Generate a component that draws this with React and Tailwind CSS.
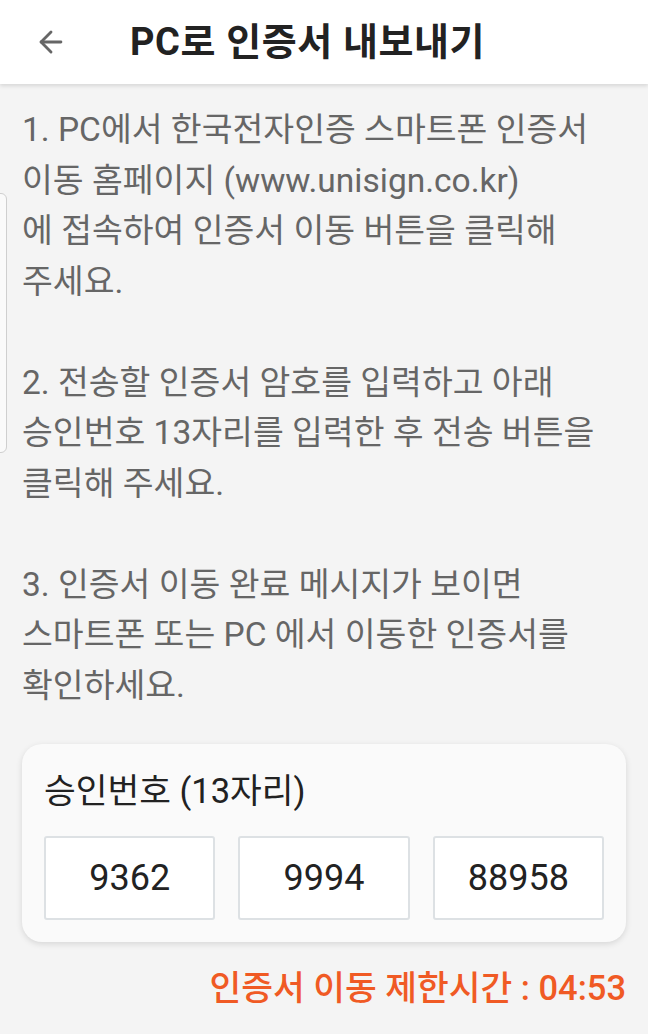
import { ArrowLeft } from 'lucide-react';

const font = { fontFamily: 'Roboto, "Noto Sans CJK KR", sans-serif' };

const guide = [
  '1. PC에서 한국전자인증 스마트폰 인증서',
  '이동 홈페이지 (www.unisign.co.kr)',
  '에 접속하여 인증서 이동 버튼을 클릭해',
  '주세요.',
  '',
  '2. 전송할 인증서 암호를 입력하고 아래',
  '승인번호 13자리를 입력한 후 전송 버튼을',
  '클릭해 주세요.',
  '',
  '3. 인증서 이동 완료 메시지가 보이면',
  '스마트폰 또는 PC 에서 이동한 인증서를',
  '확인하세요.',
];

const codes = ['9362', '9994', '88958'];

export default function App() {
  return (
    <div className="relative min-h-[1034px] w-[648px] overflow-hidden bg-[#f4f4f4]" style={font}>
      {/* header */}
      <header className="relative z-10 flex h-[84px] items-center bg-white shadow-[0_2px_4px_rgba(0,0,0,0.12)]">
        <div className="flex w-[130px] items-center pl-[34px]">
          <ArrowLeft className="h-[34px] w-[34px] text-[#666]" strokeWidth={2} />
        </div>
        <h1 className="text-[38px] font-bold leading-none tracking-[0.6px] text-[#222]">PC로 인증서 내보내기</h1>
      </header>

      {/* edge handle */}
      <div className="absolute left-[-6px] top-[193px] h-[260px] w-[13px] rounded-md border border-[#cfcfcf] bg-[#fafafa]" />

      <main className="px-[22px] pt-[21px]">
        <div className="text-[33.5px] leading-[50.5px] text-[#666]">
          {guide.map((line, i) => (
            <p key={i} className="h-[50.5px] whitespace-nowrap">{line}</p>
          ))}
        </div>

        <section className="mt-[33px] rounded-[20px] bg-[#fafafa] px-[22px] pb-[22px] pt-[24px] shadow-[0_2px_6px_rgba(0,0,0,0.12)]">
          <h2 className="text-[34.5px] leading-[46px] text-[#222]">승인번호 (13자리)</h2>
          <div className="mt-[22px] grid grid-cols-3 gap-[23px]">
            {codes.map((c) => (
              <div
                key={c}
                className="flex h-[84px] items-center justify-center rounded-[3px] border-2 border-[#dde1e4] bg-white text-[36px] text-[#222]"
              >
                {c}
              </div>
            ))}
          </div>
        </section>

        <p className="mt-[26px] text-right text-[34.5px] font-medium leading-[40px] text-[#f05a24]">
          인증서 이동 제한시간 : 04:53
        </p>
      </main>
    </div>
  );
}
